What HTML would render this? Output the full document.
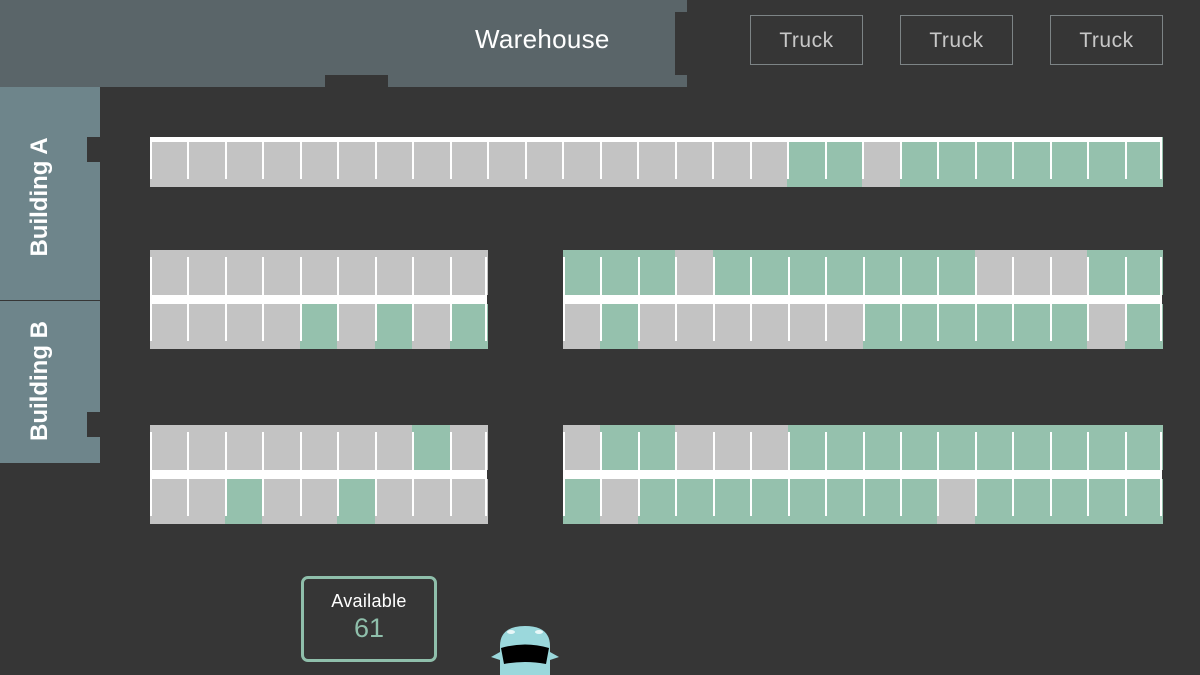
<!DOCTYPE html>
<html><head><meta charset="utf-8"><style>
*{margin:0;padding:0;box-sizing:border-box}
body{width:1200px;height:675px;background:#363636;position:relative;overflow:hidden;font-family:"Liberation Sans",sans-serif}
.a{position:absolute}
.s{position:absolute;background:#c3c3c3}
.g{background:#95c1ad}
.l{position:absolute;width:2px;background:#fff}
.truck{position:absolute;top:15px;width:113px;height:50px;border:1px solid #7d8486;color:#c8c8c8;font-size:21px;text-align:center;line-height:50px;letter-spacing:.5px}
.bl{position:absolute;color:#fff;font-weight:bold;font-size:24px;transform:rotate(-90deg);white-space:nowrap;width:140px;text-align:center;left:-30px}
</style></head><body>
<div class="a" style="left:0;top:0;width:687px;height:87px;background:#5a6569"></div>
<div class="a" style="left:325px;top:75px;width:63px;height:12px;background:#363636"></div>
<div class="a" style="left:675px;top:12px;width:12px;height:63px;background:#363636"></div>
<div class="a" style="left:475px;top:24px;color:#fff;font-size:26px;letter-spacing:.3px">Warehouse</div>
<div class="truck" style="left:750px">Truck</div>
<div class="truck" style="left:900px">Truck</div>
<div class="truck" style="left:1050px">Truck</div>
<div class="a" style="left:0;top:87px;width:100px;height:213px;background:#6e858b"></div>
<div class="a" style="left:0;top:301px;width:100px;height:162px;background:#6e858b"></div>
<div class="a" style="left:0;top:300px;width:100px;height:1px;background:#363636"></div>
<div class="a" style="left:87px;top:137px;width:13px;height:25px;background:#363636"></div>
<div class="a" style="left:87px;top:412px;width:13px;height:25px;background:#363636"></div>
<div class="bl" style="top:183px">Building A</div>
<div class="bl" style="top:367px">Building B</div>
<div id="lot"></div>
<div class="a" style="left:301px;top:576px;width:136px;height:86px;border:3px solid #8fbfab;border-radius:7px;text-align:center">
<div style="color:#fff;font-size:18px;margin-top:12px;letter-spacing:.3px">Available</div>
<div style="color:#8fbfab;font-size:27px;margin-top:1px">61</div></div>
<svg class="a" style="left:490px;top:624px" width="70" height="51" viewBox="0 0 70 51">
<path d="M10 51 L10 22 Q10 2 35 2 Q60 2 60 22 L60 51Z" fill="#9bd8dc"/>
<path d="M1 33 L10 28 L10 36Z M69 33 L60 28 L60 36Z" fill="#9bd8dc"/>
<path d="M11 24 Q35 17 59 24 L56 40 Q35 36 14 40Z" fill="#000"/>
<ellipse cx="21" cy="8" rx="4" ry="2" fill="#e8f7f8"/><ellipse cx="49" cy="8" rx="4" ry="2" fill="#e8f7f8"/>
</svg>
<script>
var lot=document.getElementById('lot'),h='';
function row(x0,n,y,ht,greens,ly0,ly1){
 var w=(n==27?1012:(n==9?337:599))/n;
 for(var i=0;i<n;i++){var x=x0+i*w;h+='<div class="s'+(greens.indexOf(i)>=0?' g':'')+'" style="left:'+x+'px;top:'+y+'px;width:'+(w+0.6)+'px;height:'+ht+'px"></div>';}
 for(var i=0;i<=n;i++){var x=x0+i*w-(i==n?2:0);h+='<div class="l" style="left:'+x+'px;top:'+ly0+'px;height:'+(ly1-ly0)+'px"></div>';}
}
function stripe(x,y,w,hh){h+='<div class="a" style="background:#fff;left:'+x+'px;top:'+y+'px;width:'+w+'px;height:'+hh+'px"></div>';}
row(150,27,137,50,[17,18,20,21,22,23,24,25,26],142,179);
stripe(150,137,1012,5);
function dbl(x,n,y,top,bot){row(x,n,y,45,top,y+7,y+47);row(x,n,y+54,45,bot,y+54,y+91);stripe(x,y+45,n==9?337:599,9);}
dbl(150,9,250,[],[4,6,8]);
dbl(563,16,250,[0,1,2,4,5,6,7,8,9,10,14,15],[1,8,9,10,11,12,13,15]);
dbl(150,9,425,[7],[2,5]);
dbl(563,16,425,[1,2,6,7,8,9,10,11,12,13,14,15],[0,2,3,4,5,6,7,8,9,11,12,13,14,15]);
lot.innerHTML=h;
</script>
</body></html>
